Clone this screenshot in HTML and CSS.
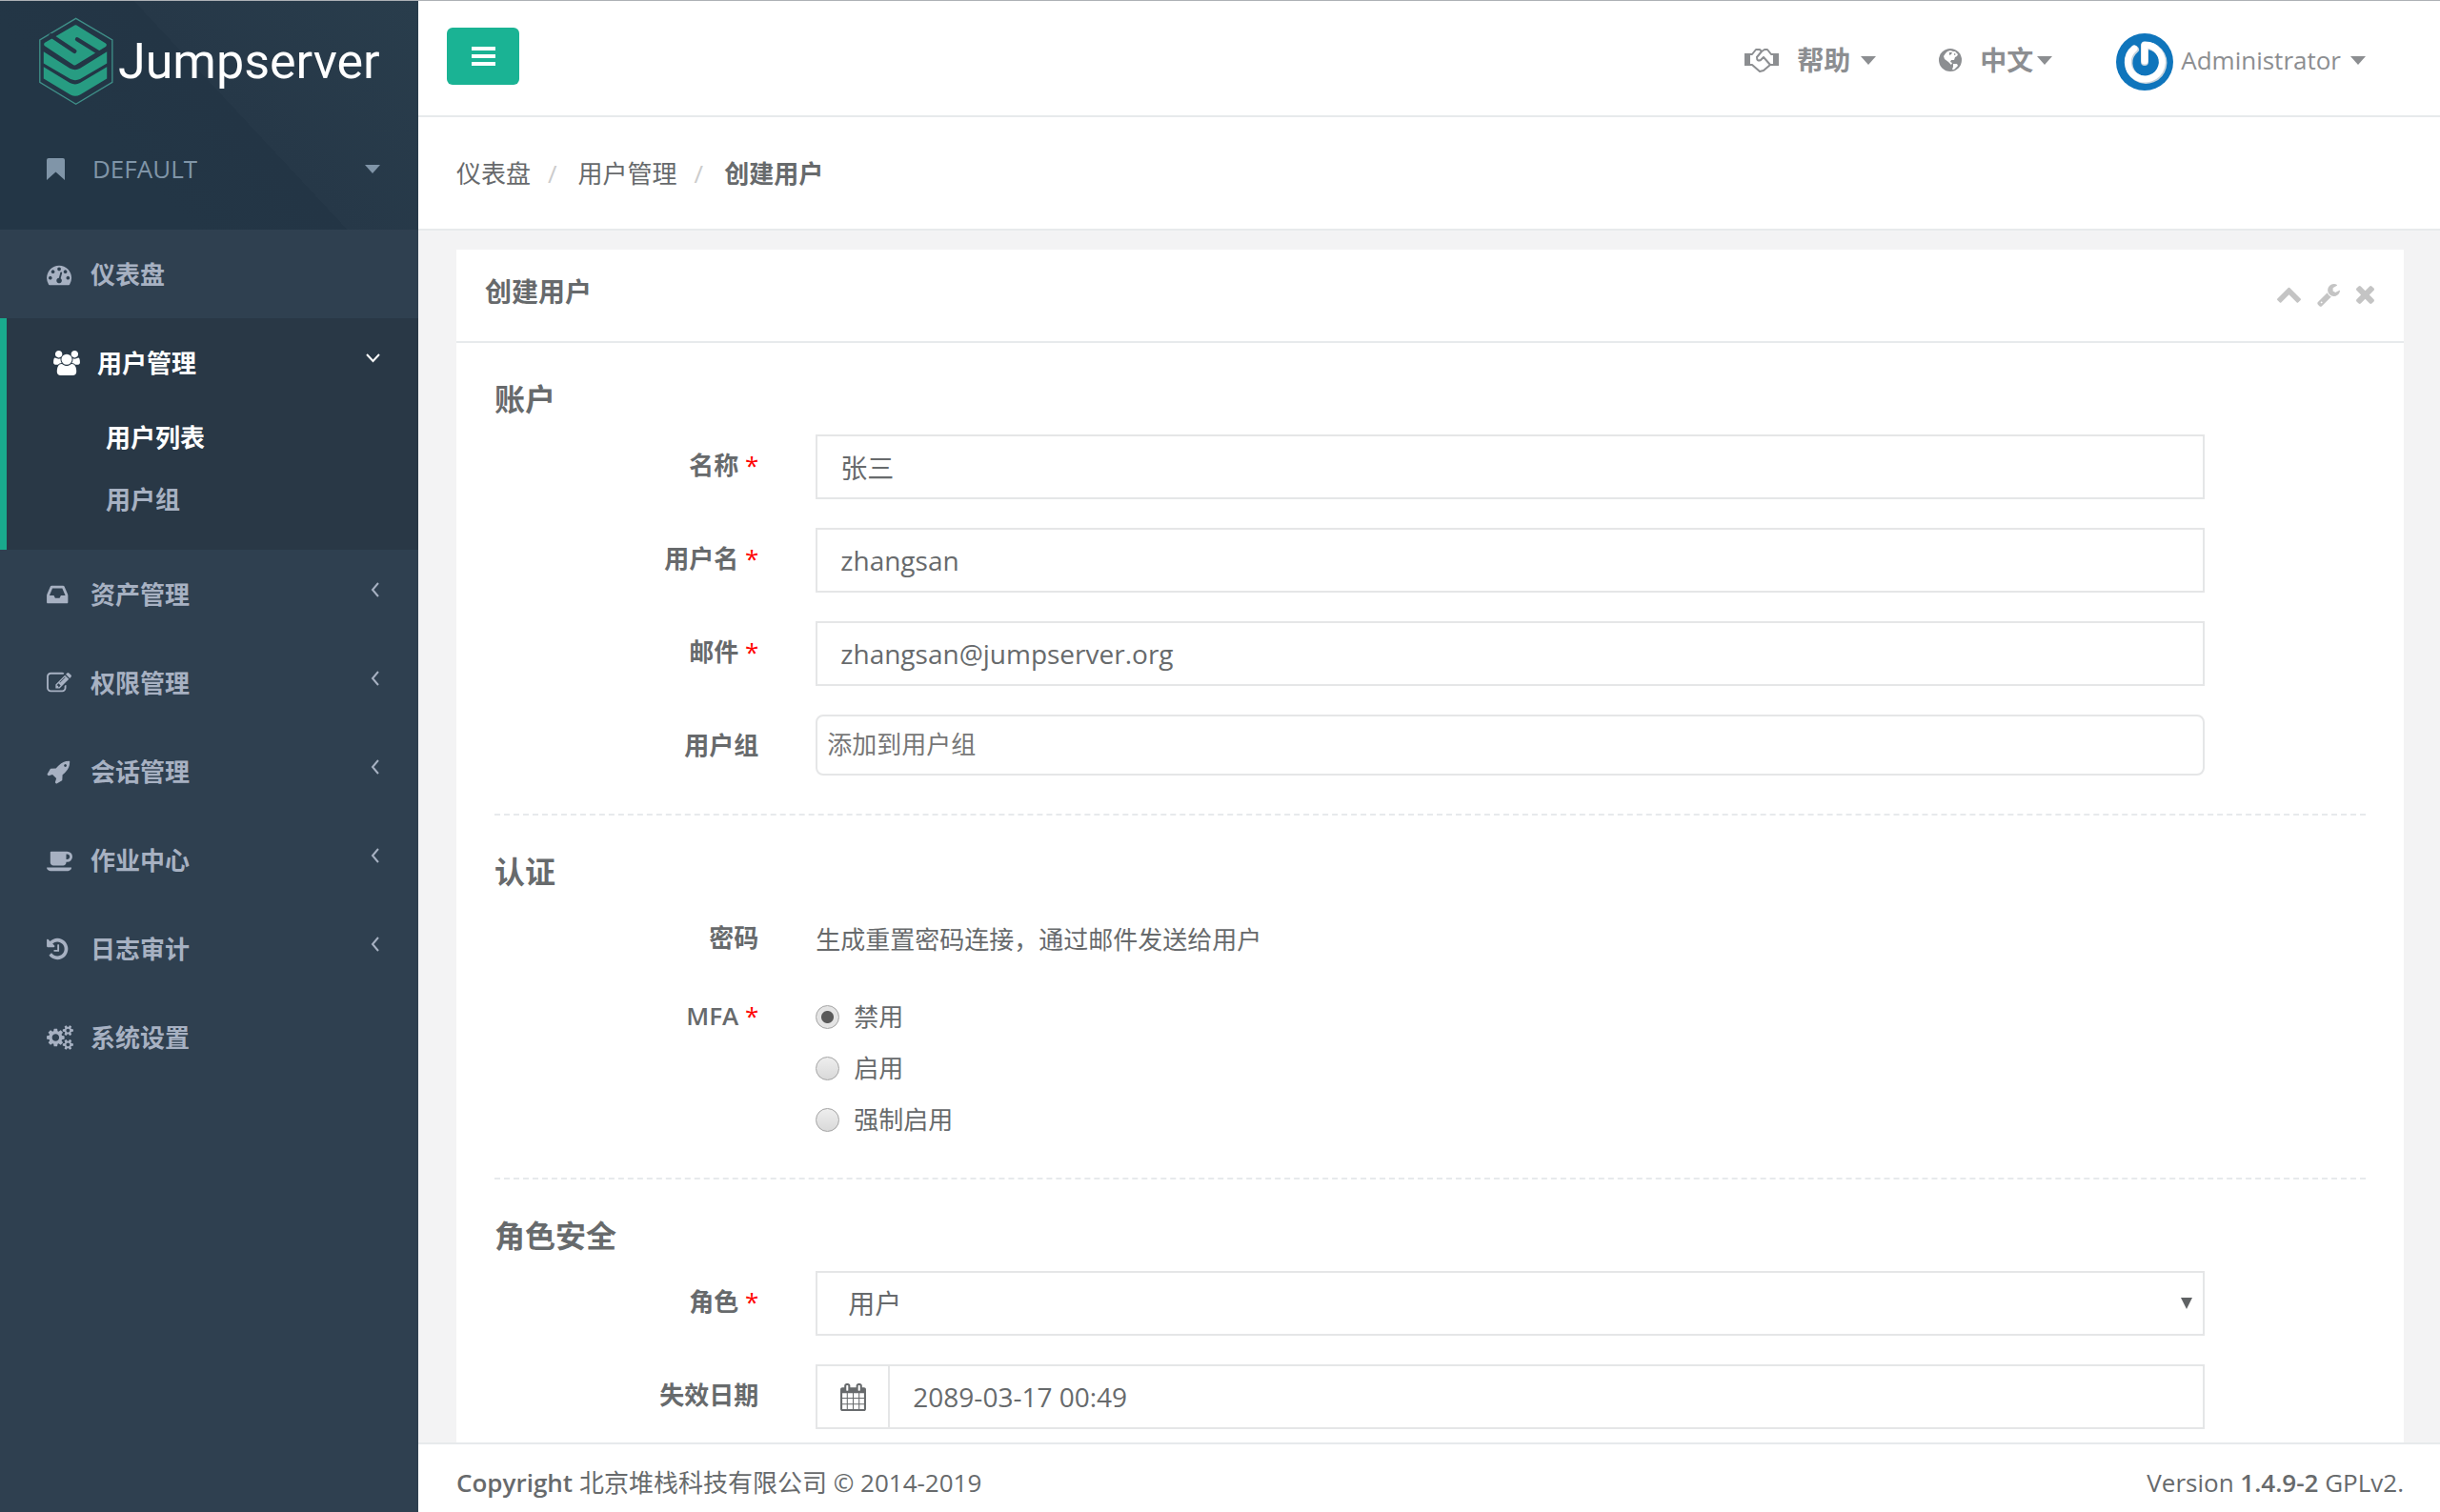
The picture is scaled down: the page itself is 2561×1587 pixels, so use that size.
FILE: index.html
```html
<!DOCTYPE html>
<html lang="zh-CN">
<head>
<meta charset="utf-8">
<meta name="viewport" content="width=device-width, initial-scale=1">
<title>创建用户 - Jumpserver</title>
<link rel="stylesheet" href="styles.css">
</head>
<body>
<div class="wrapper">
  <nav class="sidebar">
    <div class="sidebar-header">
      <a class="brand" href="#">
        <svg class="brand-mark" viewBox="120 54 240 280" aria-hidden="true">
          <path d="M239 58 354 126V260L239 329 125 260V126Z" fill="none" stroke="#3f8f88" stroke-width="4"/>
          <path d="M144 140 238 85 330 142 235 200Z" fill="#279c82" stroke="#279c82" stroke-width="12" stroke-linejoin="round"/>
          <path d="M160 112 235 162M314 168 243 124" fill="none" stroke="#243646" stroke-width="13" stroke-linecap="round"/>
          <path d="M137 163 220 216Q237 224 252 216L337 163V200L252 250Q237 257 222 250L137 200Z" fill="#279c82"/>
          <path d="M137 211 220 262Q237 270 252 262L337 211V248L252 299Q237 308 222 299L137 248Z" fill="#279c82"/>
        </svg>
        <span class="brand-name">Jumpserver</span>
      </a>
      <a class="org" href="#">
        <svg class="icon-bookmark" viewBox="0 0 19 23" aria-hidden="true"><path d="M2 0H17Q19 0 19 2V23L9.500 14.500 0 23V2Q0 0 2 0Z"/></svg>
        <span class="org-name">DEFAULT</span>
        <span class="caret"></span>
      </a>
    </div>
    <ul class="menu">
      <li>
        <a class="menu-link" href="#">
          <svg class="menu-icon" viewBox="0 0 1920 1792" aria-hidden="true"><path d="M384 1152q0-53-37.500-90.500t-90.500-37.500-90.500 37.500-37.500 90.500 37.500 90.500 90.500 37.500 90.500-37.500 37.500-90.500zm192-448q0-53-37.500-90.500t-90.500-37.500-90.500 37.500-37.500 90.500 37.500 90.500 90.500 37.500 90.500-37.500 37.500-90.500zm428 481l101-382q6-26-7.500-48.500t-38.500-29.500-48 6.500-30 39.500l-101 382q-60 5-107 43.500t-63 98.500q-20 77 20 146t117 89 146-20 89-117q16-60-6-117t-72-91zm660-33q0-53-37.500-90.500t-90.500-37.500-90.500 37.500-37.500 90.500 37.500 90.500 90.500 37.500 90.500-37.500 37.500-90.500zm-640-640q0-53-37.500-90.500t-90.500-37.500-90.500 37.500-37.500 90.500 37.500 90.500 90.500 37.500 90.500-37.500 37.500-90.500zm448 192q0-53-37.500-90.500t-90.500-37.500-90.500 37.500-37.500 90.500 37.500 90.500 90.500 37.500 90.500-37.500 37.500-90.500zm320 448q0 261-141 483-19 29-54 29h-1402q-35 0-54-29-141-221-141-483 0-182 71-348t191-286 286-191 348-71 348 71 286 191 191 286 71 348z"/></svg>
          <span>仪表盘</span>
        </a>
      </li>
      <li class="active">
        <a class="menu-link" href="#">
          <svg class="menu-icon" viewBox="0 0 1920 1792" aria-hidden="true"><path d="M593 896q-162 5-265 128h-134q-82 0-138-40.500t-56-118.500q0-353 124-353 6 0 43.500 21t97.500 42.500 119 21.500q67 0 133-23-5 37-5 66 0 139 81 256zm1071 637q0 120-73 189.500t-194 69.500h-874q-121 0-194-69.500t-73-189.500q0-53 3.500-103.500t14-109 26.500-108.500 43-97.500 62-81 85.500-53.500 111.500-20q10 0 43 21.500t73 48 107 48 135 21.500 135-21.500 107-48 73-48 43-21.500q61 0 111.500 20t85.500 53.500 62 81 43 97.500 26.500 108.500 14 109 3.500 103.500zm-1024-1277q0 106-75 181t-181 75-181-75-75-181 75-181 181-75 181 75 75 181zm704 384q0 159-112.500 271.500t-271.500 112.500-271.500-112.500-112.500-271.500 112.500-271.500 271.500-112.500 271.500 112.500 112.500 271.500zm576 225q0 78-56 118.500t-138 40.500h-134q-103-123-265-128 81-117 81-256 0-29-5-66 66 23 133 23 59 0 119-21.500t97.500-42.500 43.500-21q124 0 124 353zm-128-609q0 106-75 181t-181 75-181-75-75-181 75-181 181-75 181 75 75 181z"/></svg>
          <span>用户管理</span>
          <svg class="arrow arrow-down" viewBox="0 0 15 10" aria-hidden="true"><path d="M1 1 7.500 8 14 1"/></svg>
        </a>
        <ul class="submenu">
          <li><a class="current" href="#">用户列表</a></li>
          <li><a href="#">用户组</a></li>
        </ul>
      </li>
      <li>
        <a class="menu-link" href="#">
          <svg class="menu-icon" viewBox="128 0 1920 1792" aria-hidden="true"><path d="M1151 960h316q-1-3-2.500-8t-2.500-8l-212-496h-708l-212 496q-1 2-2.500 8t-2.500 8h316l95 192h320zm513 30v482q0 26-19 45t-45 19h-1408q-26 0-45-19t-19-45v-482q0-62 25-123l238-552q10-25 36.500-42t52.500-17h832q26 0 52.500 17t36.500 42l238 552q25 61 25 123z"/></svg>
          <span>资产管理</span>
          <svg class="arrow" viewBox="0 0 10 16" aria-hidden="true"><path d="M8 1 2 8 8 15"/></svg>
        </a>
      </li>
      <li>
        <a class="menu-link" href="#">
          <svg class="menu-icon" viewBox="0 0 1920 1792" aria-hidden="true"><path d="M888 1184l116-116-152-152-116 116v56h96v96h56zm440-720q-16-16-33 1l-350 350q-17 17-1 33t33-1l350-350q17-17 1-33zm80 594v190q0 119-84.500 203.500t-203.500 84.500h-832q-119 0-203.500-84.500t-84.500-203.500v-832q0-119 84.500-203.500t203.500-84.500h832q63 0 117 25 15 7 18 23 3 17-9 29l-49 49q-14 14-32 8-23-6-45-6h-832q-66 0-113 47t-47 113v832q0 66 47 113t113 47h832q66 0 113-47t47-113v-126q0-13 9-22l64-64q15-15 35-7t20 29zm-96-738l288 288-672 672h-288v-288zm444 132l-92 92-288-288 92-92q28-28 68-28t68 28l152 152q28 28 28 68t-28 68z"/></svg>
          <span>权限管理</span>
          <svg class="arrow" viewBox="0 0 10 16" aria-hidden="true"><path d="M8 1 2 8 8 15"/></svg>
        </a>
      </li>
      <li>
        <a class="menu-link" href="#">
          <svg class="menu-icon" viewBox="0 0 1920 1792" aria-hidden="true"><path d="M1440 448q0-40-28-68t-68-28-68 28-28 68 28 68 68 28 68-28 28-68zm224-288q0 249-75.500 430.500t-253.500 360.500q-81 80-195 176l-20 379q-2 16-16 26l-384 224q-7 4-16 4-12 0-23-9l-64-64q-13-14-8-32l85-276-281-281-276 85q-3 1-9 1-14 0-23-9l-64-64q-17-19-5-39l224-384q10-14 26-16l379-20q96-114 176-195 188-187 358-258t431-71q14 0 24 9.500t10 22.500z"/></svg>
          <span>会话管理</span>
          <svg class="arrow" viewBox="0 0 10 16" aria-hidden="true"><path d="M8 1 2 8 8 15"/></svg>
        </a>
      </li>
      <li>
        <a class="menu-link" href="#">
          <svg class="menu-icon" viewBox="0 0 1920 1792" aria-hidden="true"><path d="M1664 640q0-80-56-136t-136-56h-64v384h64q80 0 136-56t56-136zm-1664 768h1792q0 106-75 181t-181 75h-1280q-106 0-181-75t-75-181zm1856-768q0 159-112.500 271.500t-271.500 112.500h-64v32q0 92-66 158t-158 66h-704q-92 0-158-66t-66-158v-736q0-26 19-45t45-19h1152q159 0 271.500 112.500t112.500 271.500z"/></svg>
          <span>作业中心</span>
          <svg class="arrow" viewBox="0 0 10 16" aria-hidden="true"><path d="M8 1 2 8 8 15"/></svg>
        </a>
      </li>
      <li>
        <a class="menu-link" href="#">
          <svg class="menu-icon" viewBox="128 0 1920 1792" aria-hidden="true"><path d="M1664 896q0 156-61 298t-164 245-245 164-298 61q-172 0-327-72.500t-264-204.500q-7-10-6.500-22.500t8.500-20.500l137-138q10-9 25-9 16 2 23 12 73 95 179 147t225 52q104 0 198.500-40.500t163.500-109.500 109.500-163.500 40.500-198.500-40.500-198.500-109.500-163.500-163.500-109.500-198.500-40.500q-98 0-188 35.500t-160 101.500l137 138q31 30 14 69-17 40-59 40h-448q-26 0-45-19t-19-45v-448q0-42 40-59 39-17 69 14l130 129q107-101 244.500-156.500t284.500-55.500q156 0 298 61t245 164 164 245 61 298zm-640-288v448q0 14-9 23t-23 9h-320q-14 0-23-9t-9-23v-64q0-14 9-23t23-9h224v-352q0-14 9-23t23-9h64q14 0 23 9t9 23z"/></svg>
          <span>日志审计</span>
          <svg class="arrow" viewBox="0 0 10 16" aria-hidden="true"><path d="M8 1 2 8 8 15"/></svg>
        </a>
      </li>
      <li>
        <a class="menu-link" href="#">
          <svg class="menu-icon" viewBox="0 0 1920 1792" aria-hidden="true"><path d="M896 896q0-106-75-181t-181-75-181 75-75 181 75 181 181 75 181-75 75-181zm768 512q0-52-38-90t-90-38-90 38-38 90q0 53 37.500 90.500t90.500 37.500 90.500-37.500 37.500-90.500zm0-1024q0-52-38-90t-90-38-90 38-38 90q0 53 37.500 90.500t90.500 37.500 90.500-37.500 37.500-90.500zm-384 421v185q0 10-7 19.500t-16 10.500l-155 24q-11 35-32 76 34 48 90 115 7 11 7 20 0 12-7 19-23 30-82.500 89.500t-78.500 59.500q-11 0-21-7l-115-90q-37 19-77 31-11 108-23 155-7 24-30 24h-186q-11 0-20-7.500t-10-17.500l-23-153q-34-10-75-31l-118 89q-7 7-20 7-11 0-21-8-144-133-144-160 0-9 7-19 10-14 41-53t47-61q-23-44-35-82l-152-24q-10-1-17-9.500t-7-19.500v-185q0-10 7-19.500t16-10.500l155-24q11-35 32-76-34-48-90-115-7-11-7-20 0-12 7-20 22-30 82-89t79-59q11 0 21 7l115 90q34-18 77-32 11-108 23-154 7-24 30-24h186q11 0 20 7.500t10 17.500l23 153q34 10 75 31l118-89q8-7 20-7 11 0 21 8 144 133 144 160 0 8-7 19-12 16-42 54t-45 60q23 48 34 82l152 23q10 2 17 10.500t7 19.500zm640 533v140q0 16-149 31-12 27-30 52 51 113 51 138 0 4-4 7-122 71-124 71-8 0-46-47t-52-68q-20 2-30 2t-30-2q-14 21-52 68t-46 47q-2 0-124-71-4-3-4-7 0-25 51-138-18-25-30-52-149-15-149-31v-140q0-16 149-31 13-29 30-52-51-113-51-138 0-4 4-7 4-2 35-20t59-34 30-16q8 0 46 46.500t52 67.500q20-2 30-2t30 2q51-71 92-112l6-2q4 0 124 70 4 3 4 7 0 25-51 138 17 23 30 52 149 15 149 31zm0-1024v140q0 16-149 31-12 27-30 52 51 113 51 138 0 4-4 7-122 71-124 71-8 0-46-47t-52-68q-20 2-30 2t-30-2q-14 21-52 68t-46 47q-2 0-124-71-4-3-4-7 0-25 51-138-18-25-30-52-149-15-149-31v-140q0-16 149-31 13-29 30-52-51-113-51-138 0-4 4-7 4-2 35-20t59-34 30-16q8 0 46 46.500t52 67.500q20-2 30-2t30 2q51-71 92-112l6-2q4 0 124 70 4 3 4 7 0 25-51 138 17 23 30 52 149 15 149 31z"/></svg>
          <span>系统设置</span>
        </a>
      </li>
    </ul>
  </nav>

  <div class="page">
    <header class="topbar">
      <button class="toggle" type="button" aria-label="切换菜单">
        <svg viewBox="0 0 25 20" aria-hidden="true"><path d="M0 0H25V4H0ZM0 8H25V12H0ZM0 16H25V20H0Z"/></svg>
      </button>
      <nav class="topnav">
        <a class="help" href="#">
          <svg class="icon-hands" viewBox="0 0 36 26" aria-hidden="true">
            <path d="M0 6H6V19H0ZM30 6H36V19H30Z"/>
            <path d="M6 7H8L12 2H16L18 4 21 2H24L28 7H30M6 18H8L16 25 20 24 27 18H30M18 4 13 10Q13 15 17 13L20 10 27 18" fill="none" stroke="currentColor" stroke-width="2" stroke-linejoin="round"/>
          </svg>
          <strong>帮助</strong>
          <span class="caret"></span>
        </a>
        <a class="lang" href="#">
          <svg class="icon-globe" viewBox="0 0 24 24" aria-hidden="true">
            <circle cx="12" cy="12" r="12"/>
            <path d="M9 3 12 2 15 3 17 3 20 6 19 8 17 9 16 12 13 12 12 14 14 15 13 17 10 14 6 11 5 8 7 5ZM15 16 19 16 20 18 16 22 14 22 15 19Z" fill="#fff"/>
            <path d="M11 4 14 4 13 6 11 7ZM16 5 18 6 16 7Z"/>
          </svg>
          <span class="lang-name"><strong>中文</strong><span class="caret"></span></span>
        </a>
        <a class="account" href="#">
          <svg class="avatar" viewBox="0 0 60 60" aria-hidden="true">
            <circle cx="30" cy="30" r="30" fill="#0f75bc"/>
            <path d="M20 17A18 18 0 1 0 30 13V30" fill="none" stroke="#c5d3dd" stroke-width="8" stroke-linecap="round" stroke-linejoin="round"/>
            <path d="M19 16A18 18 0 1 0 30 12V29" fill="none" stroke="#fff" stroke-width="7" stroke-linecap="round" stroke-linejoin="round"/>
          </svg>
          <span class="account-name">Administrator</span>
          <span class="caret"></span>
        </a>
      </nav>
    </header>

    <ol class="breadcrumb">
      <li><a href="#">仪表盘</a></li>
      <li><a href="#">用户管理</a></li>
      <li><strong>创建用户</strong></li>
    </ol>

    <main class="content">
      <section class="card">
        <header class="card-title">
          <h1>创建用户</h1>
          <div class="card-tools">
            <button type="button" aria-label="收起"><svg class="tool-up" viewBox="90 430 1612 1100" aria-hidden="true"><path d="M1683 1331l-166 165q-19 19-45 19t-45-19l-531-531-531 531q-19 19-45 19t-45-19l-166-165q-19-19-19-45.500t19-45.500l742-741q19-19 45-19t45 19l742 741q19 19 19 45.500t-19 45.500z"/></svg></button>
            <button type="button" aria-label="设置"><svg class="tool-wrench" viewBox="60 120 1670 1670" aria-hidden="true"><path d="M448 1472q0-26-19-45t-45-19-45 19-19 45 19 45 45 19 45-19 19-45zm644-420l-682 682q-37 37-90 37-52 0-91-37l-106-108q-38-36-38-90 0-53 38-91l681-681q39 98 114.500 173.500t173.500 114.500zm634-435q0 39-23 106-47 134-164.500 217.500t-258.500 83.500q-185 0-316.500-131.500t-131.500-316.500 131.500-316.500 316.500-131.500q58 0 121.500 16.500t107.500 46.500q16 11 16 28t-16 28l-293 169v224l193 107q5-3 79-48.500t135.500-81 70.500-35.500q15 0 23.500 10t8.500 25z"/></svg></button>
            <button type="button" aria-label="关闭"><svg class="tool-close" viewBox="302 366 1188 1188" aria-hidden="true"><path d="M1490 1322q0 40-28 68l-136 136q-28 28-68 28t-68-28l-294-294-294 294q-28 28-68 28t-68-28l-136-136q-28-28-28-68t28-68l294-294-294-294q-28-28-28-68t28-68l136-136q28-28 68-28t68 28l294 294 294-294q28-28 68-28t68 28l136 136q28 28 28 68t-28 68l-294 294 294 294q28 28 28 68z"/></svg></button>
          </div>
        </header>
        <form class="card-body">
          <h2>账户</h2>
          <div class="row">
            <label for="name">名称 <span class="req">*</span></label>
            <div class="control"><input class="field" id="name" type="text" value="张三"></div>
          </div>
          <div class="row">
            <label for="username">用户名 <span class="req">*</span></label>
            <div class="control"><input class="field" id="username" type="text" value="zhangsan"></div>
          </div>
          <div class="row">
            <label for="email">邮件 <span class="req">*</span></label>
            <div class="control"><input class="field" id="email" type="text" value="zhangsan@jumpserver.org"></div>
          </div>
          <div class="row">
            <label for="groups">用户组</label>
            <div class="control"><input class="tags" id="groups" type="text" placeholder="添加到用户组"></div>
          </div>
          <hr>
          <h2>认证</h2>
          <div class="row">
            <span class="label">密码</span>
            <div class="control"><p class="static">生成重置密码连接，通过邮件发送给用户</p></div>
          </div>
          <div class="row" role="radiogroup" aria-labelledby="mfa">
            <span class="label" id="mfa">MFA <span class="req">*</span></span>
            <div class="control radios">
              <label><input type="radio" name="mfa" checked> 禁用</label>
              <label><input type="radio" name="mfa"> 启用</label>
              <label><input type="radio" name="mfa"> 强制启用</label>
            </div>
          </div>
          <hr>
          <h2>角色安全</h2>
          <div class="row">
            <label for="role">角色 <span class="req">*</span></label>
            <div class="control">
              <div class="select"><select class="field" id="role"><option>用户</option></select></div>
            </div>
          </div>
          <div class="row">
            <label for="expires">失效日期</label>
            <div class="control date">
              <span class="addon"><svg viewBox="64 0 1664 1792" aria-hidden="true"><path d="M192 1664h288v-288h-288v288zm352 0h320v-288h-320v288zm-352-352h288v-320h-288v320zm352 0h320v-320h-320v320zm-352-384h288v-288h-288v288zm736 736h320v-288h-320v288zm-384-736h320v-288h-320v288zm768 736h288v-288h-288v288zm-384-352h320v-320h-320v320zm-352-864v-288q0-13-9.500-22.500t-22.500-9.500h-64q-13 0-22.500 9.500t-9.500 22.500v288q0 13 9.500 22.500t22.500 9.500h64q13 0 22.500-9.500t9.500-22.500zm736 864h288v-320h-288v320zm-384-384h320v-288h-320v288zm384 0h288v-288h-288v288zm32-480v-288q0-13-9.500-22.500t-22.500-9.500h-64q-13 0-22.500 9.500t-9.500 22.500v288q0 13 9.500 22.500t22.500 9.500h64q13 0 22.500-9.500t9.500-22.500zm384-64v1280q0 52-38 90t-90 38h-1408q-52 0-90-38t-38-90v-1280q0-52 38-90t90-38h128v-96q0-66 47-113t113-47h64q66 0 113 47t47 113v96h384v-96q0-66 47-113t113-47h64q66 0 113 47t47 113v96h128q52 0 90 38t38 90z"/></svg></span>
              <input class="field" id="expires" type="text" value="2089-03-17 00:49">
            </div>
          </div>
        </form>
      </section>
    </main>

    <footer class="footer">
      <div><strong>Copyright</strong> 北京堆栈科技有限公司 © 2014-2019</div>
      <div>Version <strong>1.4.9-2</strong> GPLv2.</div>
    </footer>
  </div>
</div>
</body>
</html>
```

FILE: styles.css
```css
* {
  box-sizing: border-box;
}

body {
  margin: 0;
  font-family: "Open Sans", "Noto Sans CJK SC", sans-serif;
  font-size: 26px;
  line-height: 36px;
  color: #676a6c;
  background: #f3f3f4;
}

a {
  color: inherit;
  text-decoration: none;
}

ul,
ol {
  margin: 0;
  padding: 0;
  list-style: none;
}

svg {
  display: block;
  flex: none;
  fill: currentColor;
}

strong {
  font-weight: 600;
}

button {
  padding: 0;
  border: 0;
  background: none;
  color: inherit;
}

.caret {
  flex: none;
  border: 8px solid transparent;
  border-top: 9px solid;
  border-bottom: 0;
}

.wrapper {
  display: flex;
  min-height: 100vh;
  border-top: 1px solid #adb1b5;
}

/* Sidebar */

.sidebar {
  flex: none;
  width: 439px;
  background: #2f4050;
  color: #a7b1c2;
}

.sidebar-header {
  height: 240px;
  padding-top: 17px;
  background: linear-gradient(47deg, #233646 30%, #233545 55%, #263848 55%, #293d4c);
}

.brand {
  display: flex;
  align-items: center;
  gap: 4px;
  padding-left: 40px;
  color: #fff;
}

.brand-mark {
  width: 80px;
  height: 93px;
}

.brand-name {
  font-family: Roboto, sans-serif;
  font-size: 52px;
  font-weight: 400;
  line-height: 84px;
}

.org {
  display: flex;
  align-items: center;
  margin-top: 48px;
  padding: 0 40px 0 49px;
  color: #8095a8;
}

.icon-bookmark {
  width: 19px;
  height: 23px;
}

.org-name {
  flex: 1;
  padding-left: 29px;
}

.menu-link {
  display: flex;
  align-items: center;
  height: 93px;
  padding: 0 40px 0 49px;
  font-weight: 600;
}

.menu-link span {
  flex: 1;
}

.menu-icon {
  width: 28px;
  height: 26px;
  margin-right: 18px;
}

.arrow {
  width: 10px;
  height: 16px;
  margin-bottom: 10px;
  fill: none;
  stroke: currentColor;
  stroke-width: 2;
}

.arrow-down {
  width: 15px;
  height: 10px;
}

.active {
  padding-bottom: 20px;
  border-left: 7px solid #19aa8d;
  background: #293846;
}

.active .menu-link,
.current {
  color: #fff;
}

.submenu a {
  display: block;
  padding-left: 104px;
  font-weight: 600;
  line-height: 65px;
}

/* Page frame */

.page {
  display: flex;
  flex: 1;
  flex-direction: column;
  min-width: 0;
}

.topbar {
  display: flex;
  justify-content: space-between;
  height: 122px;
  padding: 28px 78px 0 30px;
  border-bottom: 2px solid #e7eaec;
  background: #fff;
}

.toggle {
  display: grid;
  place-items: center;
  width: 76px;
  height: 60px;
  border-radius: 6px;
  background: #1ab394;
  color: #fff;
}

.toggle svg {
  width: 25px;
  height: 20px;
}

.topnav {
  display: flex;
  align-items: flex-start;
  padding-top: 6px;
  color: #8c8e91;
}

.topnav a {
  display: flex;
  align-items: center;
  height: 56px;
}

.lang-name {
  display: flex;
  align-items: center;
}

.topnav strong {
  font-size: 28px;
}

.help {
  gap: 11px;
  margin-right: 66px;
}

.help strong {
  margin-left: 8px;
}

.icon-hands {
  width: 36px;
  height: 26px;
}

.lang {
  gap: 19px;
  margin-right: 67px;
}

.icon-globe {
  width: 24px;
  height: 24px;
}

.lang-name {
  gap: 4px;
}

.account {
  gap: 8px;
}

.avatar {
  width: 60px;
  height: 60px;
  margin-top: 4px;
}

.account-name {
  padding-right: 2px;
}

.breadcrumb {
  display: flex;
  align-items: center;
  height: 119px;
  padding-left: 40px;
  border-bottom: 2px solid #e7eaec;
  background: #fff;
}

.breadcrumb li + li::before {
  content: "/";
  padding: 0 22px 0 18px;
  color: #ccc;
}

.content {
  display: flex;
  flex: 1;
  padding: 20px 38px 0 40px;
}

.card {
  flex: 1;
  background: #fff;
}

.card-title {
  display: flex;
  align-items: center;
  justify-content: space-between;
  height: 98px;
  padding: 0 31px 8px 30px;
  border-bottom: 2px solid #e7eaec;
}

.card-title h1 {
  margin: 0;
  font-size: 28px;
  font-weight: 600;
}

.card-tools {
  display: flex;
  align-items: center;
  gap: 17px;
  padding-top: 7px;
  color: #c4c4c4;
}

.tool-up {
  width: 25px;
  height: 17px;
}

.tool-wrench {
  width: 24px;
  height: 24px;
}

.tool-close {
  width: 19px;
  height: 19px;
}

/* Form */

.card-body {
  padding: 40px 40px 14px;
}

h2 {
  margin: 0 0 18px;
  font-size: 32px;
  font-weight: 600;
  line-height: 38px;
}

hr {
  margin: 40px 0;
  border: 0;
  border-top: 2px dashed #e7eaec;
}

.row {
  display: grid;
  grid-template-columns: 2fr 9fr 1fr;
  margin: 0 -30px;
}

.row + .row {
  margin-top: 30px;
}

.row > label,
.label {
  padding: 14px 30px 0 0;
  font-weight: 600;
  text-align: right;
}

.req {
  color: #f00;
  font-weight: 400;
}

.control {
  min-width: 0;
  padding: 0 30px;
}

.field,
.tags {
  display: block;
  width: 100%;
  height: 68px;
  margin: 0;
  padding: 0 24px;
  border: 2px solid #e5e6e7;
  border-radius: 0;
  background: #fff;
  color: inherit;
  font: inherit;
  font-size: 28px;
}

.tags {
  height: 64px;
  padding: 0 10px 2px;
  border-radius: 8px;
  font-size: 26px;
}

.tags::placeholder {
  color: #777;
  opacity: 1;
}

.static {
  margin: 0;
  padding-top: 16px;
}

.radios {
  display: grid;
  gap: 18px;
  padding-top: 15px;
  padding-bottom: 3px;
}

.radios label {
  display: flex;
  align-items: center;
  gap: 15px;
}

.radios input {
  width: 25px;
  height: 25px;
  margin: 1px 0 0;
  border: 1px solid #a3a3a3;
  border-radius: 50%;
  appearance: none;
  background: linear-gradient(#eee, #d9d9d9);
}

.radios input:checked {
  background: radial-gradient(circle, #5a5a5a 6px, #e4e4e4 7px);
}

.select {
  position: relative;
}

.select .field {
  padding-left: 32px;
  appearance: none;
}

.select::after {
  content: "";
  position: absolute;
  top: 28px;
  right: 13px;
  border: 6px solid transparent;
  border-top: 12px solid #5f6264;
  border-bottom: 0;
  pointer-events: none;
}

.date {
  display: flex;
}

.addon {
  display: grid;
  flex: none;
  place-items: center;
  width: 76px;
  border: 2px solid #e5e6e7;
  border-right: 0;
}

.addon svg {
  width: 27px;
  height: 29px;
}

/* Footer */

.footer {
  position: sticky;
  bottom: 0;
  display: flex;
  align-items: center;
  justify-content: space-between;
  height: 75px;
  padding: 6px 38px 0 40px;
  border-top: 2px solid #e7eaec;
  background: #fff;
}
```
